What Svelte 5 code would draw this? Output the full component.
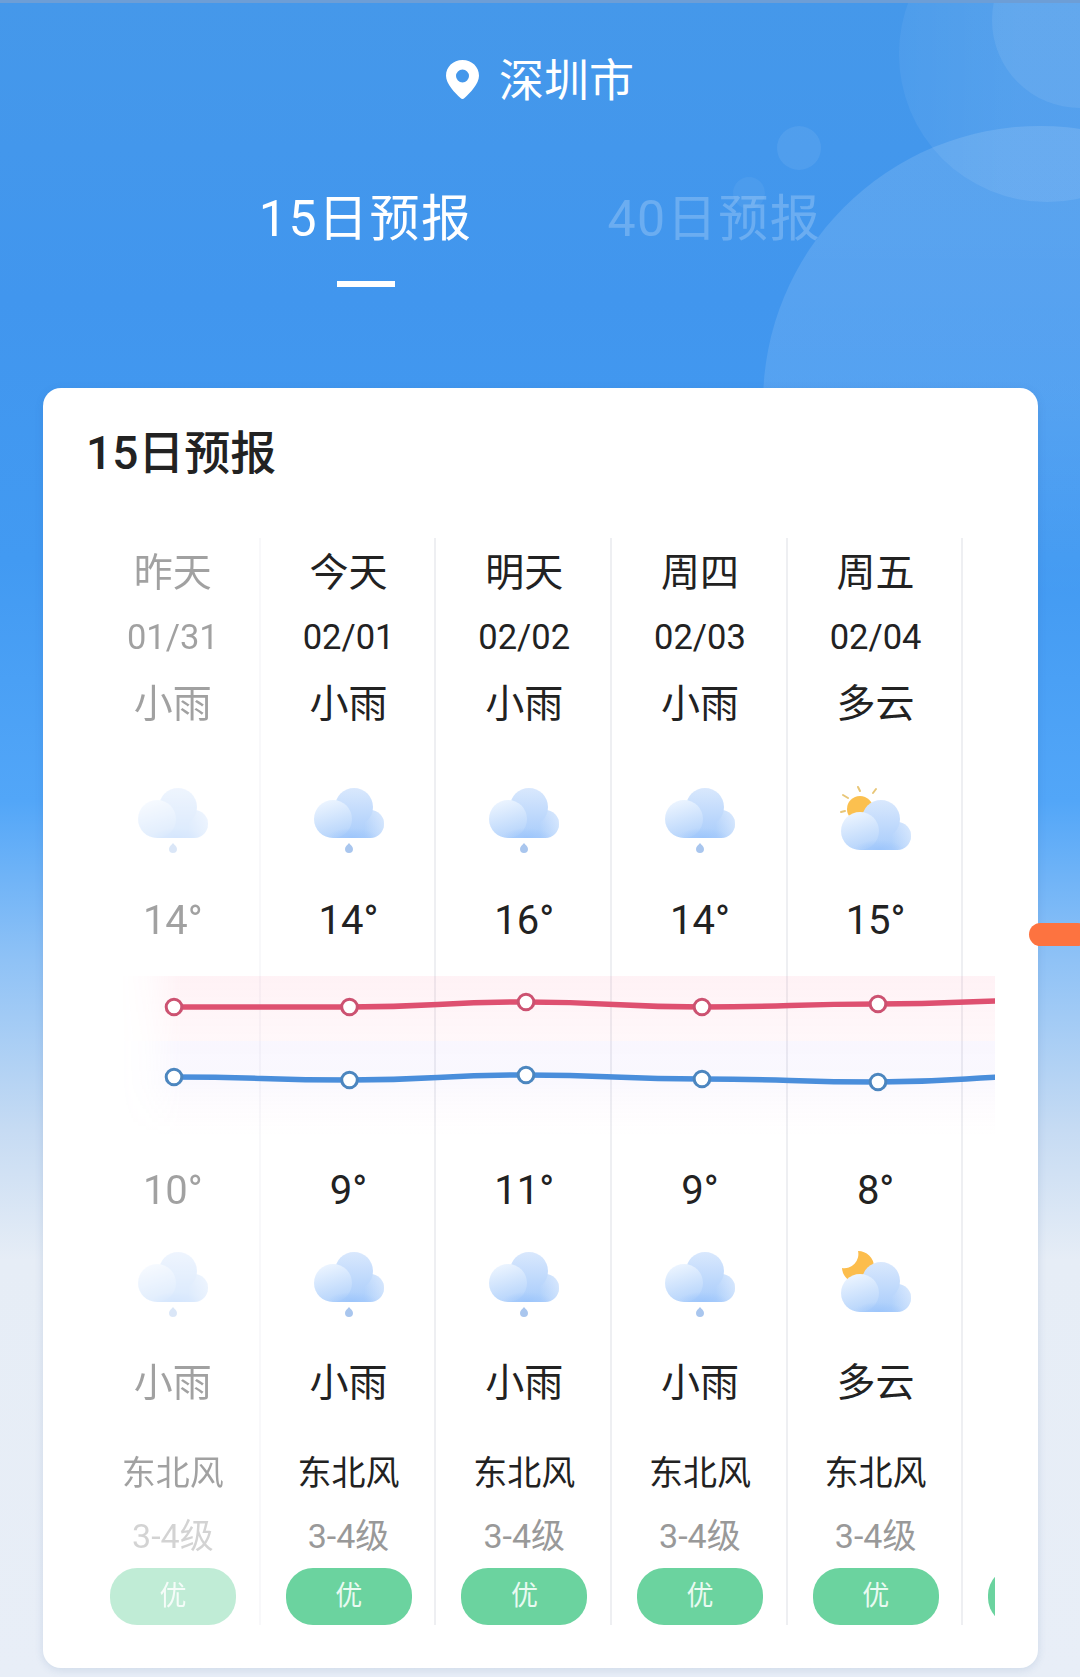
<script>
  const days = [
    { day: '昨天', date: '01/31', am: '小雨', hi: '14°', lo: '10°', pm: '小雨', wind: '东北风', level: '3-4级', aqi: '优', icon: 'rain', night: 'rain', past: true },
    { day: '今天', date: '02/01', am: '小雨', hi: '14°', lo: '9°', pm: '小雨', wind: '东北风', level: '3-4级', aqi: '优', icon: 'rain', night: 'rain' },
    { day: '明天', date: '02/02', am: '小雨', hi: '16°', lo: '11°', pm: '小雨', wind: '东北风', level: '3-4级', aqi: '优', icon: 'rain', night: 'rain' },
    { day: '周四', date: '02/03', am: '小雨', hi: '14°', lo: '9°', pm: '小雨', wind: '东北风', level: '3-4级', aqi: '优', icon: 'rain', night: 'rain' },
    { day: '周五', date: '02/04', am: '多云', hi: '15°', lo: '8°', pm: '多云', wind: '东北风', level: '3-4级', aqi: '优', icon: 'sun', night: 'moon' },
    { day: '', date: '', am: '', hi: '', lo: '', pm: '', wind: '', level: '', aqi: '', icon: null, night: null }
  ];

  const xs = [89, 264.5, 441, 617, 793, 969];
  const hiYs = [31, 31, 26, 31, 28, 24];
  const loYs = [101, 104, 99, 103, 106, 100];

  function curve(ys) {
    let d = `M${xs[0]} ${ys[0]}`;
    for (let i = 1; i < xs.length; i++) {
      const mx = (xs[i - 1] + xs[i]) / 2;
      d += ` C${mx} ${ys[i - 1]} ${mx} ${ys[i]} ${xs[i]} ${ys[i]}`;
    }
    return d;
  }
</script>

{#snippet cloud(dy)}
  <g transform="translate(0 {dy})">
    <rect x="24" y="36" width="38" height="22" fill="url(#cloudBody)" />
    <circle cx="61" cy="44" r="14" fill="url(#cloudBody)" />
    <circle cx="61" cy="44" r="14" fill="url(#cloudGlow)" />
    <circle cx="45" cy="27" r="19" fill="url(#cloudBody)" />
    <circle cx="24" cy="39" r="19" fill="url(#cloudFront)" />
    <rect x="18" y="38" width="50" height="20" fill="url(#cloudFoot)" />
  </g>
{/snippet}

{#snippet icon(kind)}
  <svg class="icon" viewBox="0 0 80 80" aria-hidden="true">
    {#if kind === 'rain'}
      {@render cloud(0)}
      <path d="M40 63 C41.5 65 44 66.5 44 69 A4 4 0 0 1 36 69 C36 66.5 38.5 65 40 63Z" fill="#a9c6ee" />
    {:else if kind === 'sun'}
      <g stroke="#e8c677" stroke-width="2" stroke-linecap="round">
        <path d="M7 15 L12 18" />
        <path d="M22 7 L24 11" />
        <path d="M40 9 L37 13" />
        <path d="M5 32 L9 31" />
      </g>
      <circle cx="24" cy="29" r="13" fill="#fbc04f" />
      {@render cloud(12)}
    {:else if kind === 'moon'}
      <path d="M22 7 A16 16 0 1 1 6 24 A14 14 0 0 0 22 7Z" fill="#fcbd4c" />
      {@render cloud(10)}
    {/if}
  </svg>
{/snippet}

<svg class="defs" width="0" height="0" aria-hidden="true">
  <defs>
    <linearGradient id="cloudBody" gradientUnits="userSpaceOnUse" x1="0" y1="8" x2="0" y2="58">
      <stop offset="0" stop-color="#d9e8fd" />
      <stop offset="1" stop-color="#a8ccfb" />
    </linearGradient>
    <linearGradient id="cloudGlow" x1="0" y1="0.5" x2="1" y2="0.5">
      <stop offset="0.3" stop-color="#fff" stop-opacity="0" />
      <stop offset="1" stop-color="#fff" stop-opacity="0.4" />
    </linearGradient>
    <linearGradient id="cloudFront" x1="0.3" y1="0" x2="0.6" y2="1">
      <stop offset="0" stop-color="#edf5ff" />
      <stop offset="1" stop-color="#b4d3fb" />
    </linearGradient>
    <radialGradient id="cloudFoot" cx="0.5" cy="1" r="0.5" fx="0.5" fy="1">
      <stop offset="0" stop-color="#9cc5fb" />
      <stop offset="1" stop-color="#a3c9fb" stop-opacity="0" />
    </radialGradient>
    <linearGradient id="bandHi" x1="0" y1="0" x2="0" y2="1">
      <stop offset="0" stop-color="#ff5c88" stop-opacity="0.08" />
      <stop offset="1" stop-color="#ff5c88" stop-opacity="0.045" />
    </linearGradient>
    <linearGradient id="bandLo" x1="0" y1="0" x2="0" y2="1">
      <stop offset="0" stop-color="#9a70f0" stop-opacity="0.06" />
      <stop offset="0.45" stop-color="#a080f0" stop-opacity="0.05" />
      <stop offset="1" stop-color="#ff8fc0" stop-opacity="0" />
    </linearGradient>
    <linearGradient id="fadeX" x1="0" y1="0" x2="1" y2="0">
      <stop offset="0" stop-color="#fff" stop-opacity="0" />
      <stop offset="0.03" stop-color="#fff" stop-opacity="0.25" />
      <stop offset="0.07" stop-color="#fff" stop-opacity="1" />
      <stop offset="1" stop-color="#fff" stop-opacity="1" />
    </linearGradient>
    <mask id="bandMask" maskUnits="userSpaceOnUse" x="35" y="0" width="875" height="160">
      <rect x="35" y="0" width="875" height="160" fill="url(#fadeX)" />
    </mask>
  </defs>
</svg>

<div class="page">
  <div class="deco">
    <span class="c c1"></span>
    <span class="c c2"></span>
    <span class="c c3"></span>
    <span class="c c4"></span>
    <span class="c c5"></span>
  </div>

  <span class="status"></span>

  <header class="city">
    <svg class="pin" viewBox="0 0 33 39" aria-hidden="true">
      <path fill-rule="evenodd" d="M16.5 0 C26 0 33 7 33 15.8 C33 24 24 33 18.5 38 C17.3 39.2 15.7 39.2 14.5 38 C9 33 0 24 0 15.8 C0 7 7 0 16.5 0Z M16.5 9.5 A6.5 6.5 0 1 0 16.5 22.5 A6.5 6.5 0 1 0 16.5 9.5Z" fill="#fff" />
    </svg>
    <span>深圳市</span>
  </header>

  <nav class="tabs">
    <div class="tab active">15日预报<i></i></div>
    <div class="tab">40日预报</div>
  </nav>

  <section class="card">
    <h2>15日预报</h2>
    <div class="scroller">
      {#each days as d}
        <div class="col" class:past={d.past}>
          <div class="r day">{d.day}</div>
          <div class="r date">{d.date}</div>
          <div class="r wx1">{d.am}</div>
          <div class="ic1">{@render icon(d.icon)}</div>
          <div class="r hi">{d.hi}</div>
          <div class="r lo">{d.lo}</div>
          <div class="ic2">{@render icon(d.night)}</div>
          <div class="r wx2">{d.pm}</div>
          <div class="r wind">{d.wind}</div>
          <div class="r level">{d.level}</div>
          <div class="pill">{d.aqi}</div>
        </div>
      {/each}

      <svg class="chart" viewBox="0 0 910 160" aria-hidden="true">
        <g mask="url(#bandMask)">
          <rect x="35" y="0" width="875" height="65" fill="url(#bandHi)" />
          <rect x="35" y="65" width="875" height="95" fill="url(#bandLo)" />
        </g>
        <path d={curve(hiYs)} class="line red" />
        <path d={curve(loYs)} class="line blue" />
        {#each xs.slice(0, 5) as x, i}
          <circle cx={x} cy={hiYs[i]} r="7.8" class="dot dred" />
          <circle cx={x} cy={loYs[i]} r="7.8" class="dot dblue" />
        {/each}
      </svg>
    </div>
  </section>

  <span class="blob"></span>
</div>

<style>
  :global(body) {
    margin: 0;
    background: #e8eef7;
  }
  .defs {
    position: absolute;
  }
  .page {
    position: relative;
    width: 1080px;
    height: 1677px;
    overflow: hidden;
    padding-top: 58px;
    box-sizing: border-box;
    font-family: Roboto, "Noto Sans CJK SC", sans-serif;
    background: linear-gradient(180deg, #4598ea 0, #4196ee 300px, #429af2 560px, #52a6f8 800px, #8fc2f6 960px, #c6dbf3 1130px, #e6edf6 1260px, #e8eef7 1677px);
  }
  .status {
    position: absolute;
    inset: 0 0 auto 0;
    height: 3px;
    background: #6d9ed6;
  }
  .deco {
    position: absolute;
    inset: 0;
  }
  .c {
    position: absolute;
    border-radius: 50%;
    background: rgba(255, 255, 255, 0.09);
  }
  .c1 { left: 899px; top: -94px; width: 296px; height: 296px; background: linear-gradient(90deg, rgba(255, 255, 255, 0.05), rgba(255, 255, 255, 0.09) 40%); }
  .c2 { left: 992px; top: -68px; width: 176px; height: 176px; background: rgba(255, 255, 255, 0.08); }
  .c3 { left: 777px; top: 126px; width: 44px; height: 44px; background: rgba(255, 255, 255, 0.07); }
  .c4 { left: 733px; top: 177px; width: 32px; height: 32px; background: rgba(255, 255, 255, 0.05); }
  .c5 { left: 763px; top: 126px; width: 554px; height: 554px; background: linear-gradient(180deg, rgba(255, 255, 255, 0.12) 20%, rgba(255, 255, 255, 0.1) 50%, rgba(255, 255, 255, 0) 85%); }

  .city {
    position: relative;
    display: flex;
    align-items: center;
    justify-content: center;
    gap: 20px;
    height: 48px;
    color: #fff;
    font-size: 45px;
    line-height: 48px;
  }
  .pin {
    width: 33px;
    height: 39px;
    margin-top: -6px;
  }
  .tabs {
    position: relative;
    display: flex;
    justify-content: center;
    gap: 135px;
    margin-top: 83px;
    height: 60px;
  }
  .tab {
    position: relative;
    font-size: 50px;
    line-height: 60px;
    letter-spacing: 1.5px;
    color: rgba(255, 255, 255, 0.22);
  }
  .tab.active {
    color: #fff;
  }
  .tab i {
    position: absolute;
    left: 50%;
    margin-left: -29px;
    top: 92px;
    width: 58px;
    height: 6px;
    background: #fff;
  }

  .card {
    position: relative;
    box-sizing: border-box;
    width: 995px;
    height: 1280px;
    margin: 139px 0 0 43px;
    padding: 0 0 0 42px;
    background: #fff;
    border-radius: 18px;
    box-shadow: 0 2px 8px rgba(50, 90, 150, 0.14);
  }
  h2 {
    margin: 0 0 0 1px;
    height: 150px;
    padding-top: 36px;
    box-sizing: border-box;
    font-size: 46px;
    line-height: 58px;
    font-weight: 500;
    color: #222;
  }
  .scroller {
    position: relative;
    display: flex;
    width: 910px;
    height: 1087px;
    overflow: hidden;
  }
  .col {
    flex: 0 0 175.7px;
    box-sizing: border-box;
    padding: 2px 0 0 2px;
    border-right: 2px solid #eeeff2;
    text-align: center;
    color: #222;
  }
  .col.past {
    opacity: 0.42;
  }
  .r {
    white-space: nowrap;
  }
  .day { height: 66px; line-height: 66px; font-size: 39px; }
  .date { height: 62px; line-height: 62px; font-size: 34.5px; }
  .wx1 { height: 72px; line-height: 72px; font-size: 39px; }
  .ic1 { height: 80px; margin-top: 40px; }
  .hi { height: 60px; line-height: 60px; margin-top: 31px; font-size: 40px; }
  .lo { height: 60px; line-height: 60px; margin-top: 210px; font-size: 40px; }
  .ic2 { height: 80px; margin-top: 23px; }
  .wx2 { height: 60px; line-height: 60px; margin-top: 29px; font-size: 39px; }
  .wind { height: 60px; line-height: 60px; margin-top: 30px; font-size: 34px; }
  .level { height: 50px; line-height: 50px; margin-top: 8px; font-size: 34px; color: #999; }
  .icon {
    display: block;
    width: 80px;
    height: 80px;
    margin: 0 auto;
  }
  .pill {
    width: 126px;
    height: 57px;
    margin: 7px 0 0 23px;
    border-radius: 27px;
    background: #6bd39f;
    color: #e9faf1;
    font-size: 27px;
    line-height: 57px;
    text-align: center;
  }
  .chart {
    position: absolute;
    left: 0;
    top: 438px;
    width: 910px;
    height: 160px;
  }
  .line {
    fill: none;
    stroke-width: 5.5;
  }
  .red { stroke: #de5070; }
  .blue { stroke: #4a8edb; }
  .dot {
    fill: #fff;
    stroke-width: 3;
  }
  .dred { stroke: #cc5271; }
  .dblue { stroke: #4c86bf; }
  .blob {
    position: absolute;
    left: 1029px;
    top: 923px;
    width: 60px;
    height: 23px;
    border-radius: 12px;
    background: #fd7340;
  }
</style>
